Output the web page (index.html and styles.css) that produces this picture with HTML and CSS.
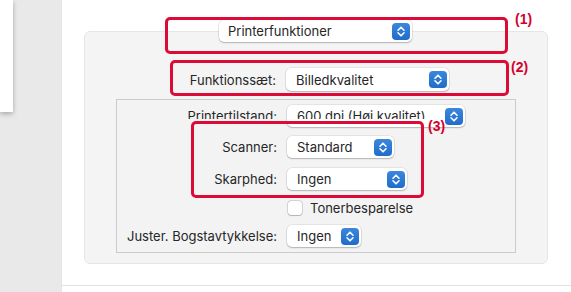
FILE: index.html
```html
<!DOCTYPE html>
<html lang="da">
<head>
    <meta charset="UTF-8">
    <meta name="viewport" content="width=device-width, initial-scale=1.0">
    <title>Printerfunktioner</title>
    <link rel="stylesheet" href="styles.css">
</head>
<body>
    <div class="window">
        <aside class="sidebar">
            <div class="page-thumb"></div>
        </aside>
        <main class="main">
            <section class="panel">
                <div class="panel-head">
                    <div class="popup popup-menu">
                        <span class="popup-text">Printerfunktioner</span>
                        <span class="stepper"><svg viewBox="0 0 17 17"><path d="M5.5 7.2 8.5 4.2l3 3M5.5 9.8l3 3 3-3"/></svg></span>
                    </div>
                </div>
                <div class="row preset-row">
                    <span class="label">Funktionssæt:</span>
                    <div class="popup popup-preset">
                        <span class="popup-text">Billedkvalitet</span>
                        <span class="stepper"><svg viewBox="0 0 17 17"><path d="M5.5 7.2 8.5 4.2l3 3M5.5 9.8l3 3 3-3"/></svg></span>
                    </div>
                </div>
                <div class="group">
                    <div class="row row-mode">
                        <span class="label"><span class="cut">Printertilstand:</span></span>
                        <div class="popup popup-mode">
                            <span class="popup-text"><span class="cut">600 dpi (Høj kvalitet)</span></span>
                            <span class="stepper"><svg viewBox="0 0 17 17"><path d="M5.5 7.2 8.5 4.2l3 3M5.5 9.8l3 3 3-3"/></svg></span>
                        </div>
                    </div>
                    <div class="row row-scanner">
                        <span class="label">Scanner:</span>
                        <div class="popup popup-scanner">
                            <span class="popup-text">Standard</span>
                            <span class="stepper"><svg viewBox="0 0 17 17"><path d="M5.5 7.2 8.5 4.2l3 3M5.5 9.8l3 3 3-3"/></svg></span>
                        </div>
                    </div>
                    <div class="row row-sharp">
                        <span class="label">Skarphed:</span>
                        <div class="popup popup-sharp">
                            <span class="popup-text">Ingen</span>
                            <span class="stepper"><svg viewBox="0 0 17 17"><path d="M5.5 7.2 8.5 4.2l3 3M5.5 9.8l3 3 3-3"/></svg></span>
                        </div>
                    </div>
                    <div class="row row-toner">
                        <span class="label"></span>
                        <span class="checkbox"></span>
                        <span class="check-text">Tonerbesparelse</span>
                    </div>
                    <div class="row row-weight">
                        <span class="label">Juster. Bogstavtykkelse:</span>
                        <div class="popup popup-weight">
                            <span class="popup-text">Ingen</span>
                            <span class="stepper"><svg viewBox="0 0 17 17"><path d="M5.5 7.2 8.5 4.2l3 3M5.5 9.8l3 3 3-3"/></svg></span>
                        </div>
                    </div>
                </div>
            </section>
            <div class="bottom-line"></div>

            <div class="mark mark-1"></div>
            <div class="mark mark-2"></div>
            <div class="mark mark-3"></div>
            <span class="tag tag-1">(1)</span>
            <span class="tag tag-2">(2)</span>
            <span class="tag tag-3">(3)</span>
        </main>
    </div>
</body>
</html>
```

FILE: styles.css
```css
* {
    box-sizing: border-box;
}
html, body {
    margin: 0;
    height: 100%;
}
body {
    font-family: Inter, "Noto Sans", sans-serif;
    font-size: 13px;
    color: #262626;
    background: #ffffff;
    overflow: hidden;
}
.window {
    display: flex;
    height: 292px;
}
.sidebar {
    width: 62px;
    flex: none;
    background: #e9e9e9;
    border-right: 1px solid #e4e4e4;
}
.page-thumb {
    width: 13px;
    height: 112px;
    background: #ffffff;
    box-shadow: 0 2px 5px rgba(0, 0, 0, 0.28);
}
.main {
    position: relative;
    flex: 1;
    padding: 31px 0 0 22px;
}
.panel {
    width: 464px;
    height: 233px;
    background: #f4f4f4;
    border: 1px solid #e6e6e6;
    border-radius: 6px;
}
.panel-head {
    height: 22px;
    margin-top: -12px;
    padding-left: 134px;
}
.row {
    display: flex;
    align-items: center;
    height: 22px;
}
.label {
    flex: none;
    text-align: right;
    white-space: nowrap;
}
.preset-row {
    margin-top: 26px;
    height: 23px;
}
.preset-row .label {
    width: 191px;
    margin-right: 10px;
}
.popup {
    position: relative;
    display: flex;
    align-items: center;
    height: 22px;
    padding-left: 10px;
    background: #ffffff;
    border-radius: 5px;
    box-shadow: 0 0 0 0.5px rgba(0, 0, 0, 0.12), 0 1px 1.5px rgba(0, 0, 0, 0.22);
    white-space: nowrap;
}
.popup-text {
    flex: 1;
}
.stepper {
    width: 18px;
    height: 17px;
    margin-right: 2px;
    border-radius: 4px;
    background: linear-gradient(#3b87dc, #1f6ccc);
    display: flex;
}
.stepper svg {
    width: 18px;
    height: 17px;
    fill: none;
    stroke: #ffffff;
    stroke-width: 1.6;
    stroke-linecap: round;
    stroke-linejoin: round;
}
.popup-menu {
    width: 193px;
    padding-left: 9px;
}
.popup-preset {
    width: 163px;
    height: 23px;
}
.group {
    width: 400px;
    height: 154px;
    margin: 8px 0 0 31px;
    background: #f3f3f3;
    border: 1px solid #cbcbcb;
}
.group .label {
    width: 160px;
    margin-right: 10px;
}
.row-mode {
    margin-top: 5px;
}
/* the screenshot cuts off the lower part of this row's text */
.cut {
    display: block;
    height: 14px;
    line-height: 22px;
    margin-top: -8px;
    overflow: hidden;
}
.row-mode .label {
    align-self: flex-start;
    height: 14px;
    padding-top: 8px;
}
.row-mode .popup-text {
    align-self: flex-start;
    height: 14px;
    padding-top: 8px;
}
.popup-mode {
    width: 178px;
}
.row-scanner {
    margin-top: 9px;
}
.popup-scanner {
    width: 107px;
}
.row-sharp {
    margin-top: 10px;
}
.popup-sharp {
    width: 120px;
}
.row-toner {
    margin-top: 7px;
}
.checkbox {
    width: 14px;
    height: 14px;
    margin-left: 1px;
    background: #ffffff;
    border-radius: 3px;
    box-shadow: 0 0 0 0.5px rgba(0, 0, 0, 0.25), 0 0.5px 1px rgba(0, 0, 0, 0.15);
}
.check-text {
    margin-left: 8px;
}
.row-weight {
    margin-top: 6px;
}
.popup-weight {
    width: 74px;
}
.bottom-line {
    margin-top: 21px;
    height: 1px;
    background: #e2e2e2;
    margin-left: -22px;
}
.mark {
    position: absolute;
    border: 3px solid #dc0a36;
    border-radius: 5px;
}
.mark-1 {
    left: 103px;
    top: 17px;
    width: 343px;
    height: 37px;
}
.mark-2 {
    left: 108px;
    top: 60px;
    width: 339px;
    height: 36px;
}
.mark-3 {
    left: 129px;
    top: 121px;
    width: 233px;
    height: 77px;
}
.tag {
    position: absolute;
    font-family: "Liberation Sans", Arial, sans-serif;
    font-weight: bold;
    font-size: 14px;
    color: #d6002f;
}
.tag-1 {
    left: 453px;
    top: 11px;
}
.tag-2 {
    left: 449px;
    top: 59px;
}
.tag-3 {
    left: 366px;
    top: 118px;
}
```
